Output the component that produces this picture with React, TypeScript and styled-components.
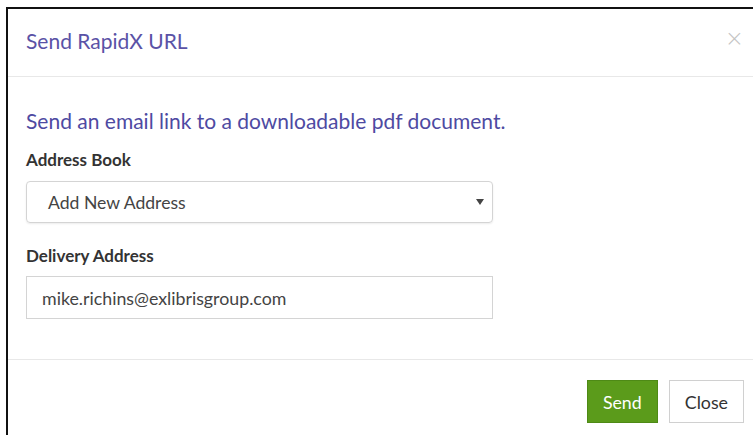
import React from "react";
import styled, { createGlobalStyle } from "styled-components";

const GlobalStyle = createGlobalStyle`
    html, body {
        margin: 0;
        padding: 0;
        background: #fff;
        width: 753px;
        height: 435px;
        overflow: hidden;
    }
    * {
        box-sizing: border-box;
    }
`;

const Page = styled.div`
    padding: 7px 0 0 6px;
    font-family: Lato, "Open Sans", "Liberation Sans", sans-serif;
`;

const Modal = styled.div`
    border-top: 2px solid #111;
    border-left: 2px solid #111;
    background: #fff;
    height: 440px;
`;

const Header = styled.div`
    display: flex;
    align-items: center;
    justify-content: space-between;
    height: 68px;
    padding: 0 9px 0 18px;
    border-bottom: 1px solid #e8e8e8;
`;

const Title = styled.h4`
    margin: 0;
    font-size: 21px;
    line-height: 24px;
    font-weight: 400;
    color: #5a52a6;
    transform: translateY(-2px);
`;

const CloseX = styled.button`
    border: none;
    background: none;
    padding: 0;
    font-size: 23px;
    line-height: 1;
    color: #c4c4c4;
    font-family: "DejaVu Sans", sans-serif;
    font-weight: 300;
    cursor: pointer;
    transform: translateY(-4px);
`;

const Body = styled.div`
    padding: 32px 18px 40px 18px;
    border-bottom: 1px solid #e8e8e8;
`;

const Lead = styled.p`
    margin: 0 0 17px 0;
    font-size: 21px;
    line-height: 24px;
    color: #4e4aa2;
`;

const Field = styled.div<{ last?: boolean }>`
    display: flex;
    flex-direction: column;
    gap: ${(p) => (p.last ? "10px" : "11px")};
    margin-bottom: ${(p) => (p.last ? "0" : "23px")};
`;

const Label = styled.label`
    font-size: 17px;
    font-weight: 700;
    color: #333;
    line-height: 20px;
`;

const SelectBox = styled.div`
    position: relative;
    display: flex;
    align-items: center;
    width: 467px;
    height: 42px;
    padding: 0 21px;
    border: 1px solid #d4d4d4;
    border-radius: 4px;
    box-shadow: 0 1px 2px rgba(0, 0, 0, 0.08);
    font-size: 17.6px;
    color: #444;
`;

const Caret = styled.span`
    position: absolute;
    right: 8px;
    top: 50%;
    margin-top: -3px;
    width: 0;
    height: 0;
    border-left: 4px solid transparent;
    border-right: 4px solid transparent;
    border-top: 6px solid #444;
`;

const TextInput = styled.input`
    width: 467px;
    height: 43px;
    padding: 0 15px;
    border: 1px solid #d4d4d4;
    border-radius: 0;
    font-family: inherit;
    font-size: 17.8px;
    color: #444;
    outline: none;
`;

const Footer = styled.div`
    display: flex;
    justify-content: flex-end;
    gap: 11px;
    padding: 20px 9px 0 0;
`;

const Button = styled.button<{ primary?: boolean }>`
    height: 43px;
    padding: 0 15px;
    font-family: inherit;
    font-size: 17.8px;
    border-radius: 0;
    border: 1px solid ${(p) => (p.primary ? "#4e8a16" : "#d0d0d0")};
    background: ${(p) => (p.primary ? "#5b9b1b" : "#fff")};
    color: ${(p) => (p.primary ? "#fff" : "#333")};
    cursor: pointer;
`;

function App() {
    return (
        <Page>
            <GlobalStyle />
            <Modal>
                <Header>
                    <Title>Send RapidX URL</Title>
                    <CloseX aria-label="Close">×</CloseX>
                </Header>
                <Body>
                    <Lead>Send an email link to a downloadable pdf document.</Lead>
                    <Field>
                        <Label>Address Book</Label>
                        <SelectBox>
                            Add New Address
                            <Caret />
                        </SelectBox>
                    </Field>
                    <Field last>
                        <Label>Delivery Address</Label>
                        <TextInput defaultValue="mike.richins@exlibrisgroup.com" />
                    </Field>
                </Body>
                <Footer>
                    <Button primary>Send</Button>
                    <Button>Close</Button>
                </Footer>
            </Modal>
        </Page>
    );
}

export default App;
